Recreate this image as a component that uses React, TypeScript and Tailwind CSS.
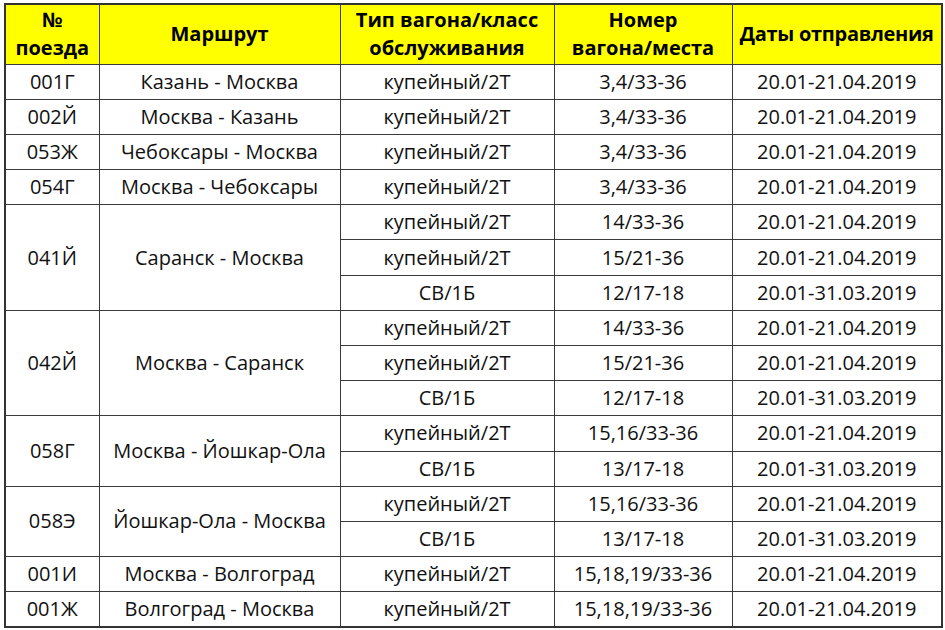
import React from "react";

type Seat = { type: string; car: string; dates: string };
type Train = { num: string; route: string; seats: Seat[] };

const trains: Train[] = [
    { num: "001Г", route: "Казань - Москва", seats: [{ type: "купейный/2Т", car: "3,4/33-36", dates: "20.01-21.04.2019" }] },
    { num: "002Й", route: "Москва - Казань", seats: [{ type: "купейный/2Т", car: "3,4/33-36", dates: "20.01-21.04.2019" }] },
    { num: "053Ж", route: "Чебоксары - Москва", seats: [{ type: "купейный/2Т", car: "3,4/33-36", dates: "20.01-21.04.2019" }] },
    { num: "054Г", route: "Москва - Чебоксары", seats: [{ type: "купейный/2Т", car: "3,4/33-36", dates: "20.01-21.04.2019" }] },
    {
        num: "041Й",
        route: "Саранск - Москва",
        seats: [
            { type: "купейный/2Т", car: "14/33-36", dates: "20.01-21.04.2019" },
            { type: "купейный/2Т", car: "15/21-36", dates: "20.01-21.04.2019" },
            { type: "СВ/1Б", car: "12/17-18", dates: "20.01-31.03.2019" },
        ],
    },
    {
        num: "042Й",
        route: "Москва - Саранск",
        seats: [
            { type: "купейный/2Т", car: "14/33-36", dates: "20.01-21.04.2019" },
            { type: "купейный/2Т", car: "15/21-36", dates: "20.01-21.04.2019" },
            { type: "СВ/1Б", car: "12/17-18", dates: "20.01-31.03.2019" },
        ],
    },
    {
        num: "058Г",
        route: "Москва - Йошкар-Ола",
        seats: [
            { type: "купейный/2Т", car: "15,16/33-36", dates: "20.01-21.04.2019" },
            { type: "СВ/1Б", car: "13/17-18", dates: "20.01-31.03.2019" },
        ],
    },
    {
        num: "058Э",
        route: "Йошкар-Ола - Москва",
        seats: [
            { type: "купейный/2Т", car: "15,16/33-36", dates: "20.01-21.04.2019" },
            { type: "СВ/1Б", car: "13/17-18", dates: "20.01-31.03.2019" },
        ],
    },
    { num: "001И", route: "Москва - Волгоград", seats: [{ type: "купейный/2Т", car: "15,18,19/33-36", dates: "20.01-21.04.2019" }] },
    { num: "001Ж", route: "Волгоград - Москва", seats: [{ type: "купейный/2Т", car: "15,18,19/33-36", dates: "20.01-21.04.2019" }] },
];

const td = "border border-[#3a3a3a] text-center align-middle p-0 leading-none whitespace-nowrap";
const th = "border border-[#3a3a3a] text-center align-middle p-0 leading-[28px] whitespace-nowrap";

export default function App() {
    return (
        <div className="min-h-screen bg-white pt-[3px] pl-[4px] font-['Open_Sans',sans-serif] text-[20px] text-[#111]">
            <table className="table-fixed border-collapse border-2 border-[#333] w-[937px]">
                <colgroup>
                    <col className="w-[94px]" />
                    <col className="w-[241px]" />
                    <col className="w-[214px]" />
                    <col className="w-[178px]" />
                    <col className="w-[210px]" />
                </colgroup>
                <thead>
                    {/* Yellow header */}
                    <tr className="h-[60px] bg-[#ffff00] font-bold text-black">
                        <th className={th}>№<br />поезда</th>
                        <th className={th}>Маршрут</th>
                        <th className={th}>Тип вагона/класс<br />обслуживания</th>
                        <th className={th}>Номер<br />вагона/места</th>
                        <th className={th + " tracking-[-0.3px]"}>Даты отправления</th>
                    </tr>
                </thead>
                <tbody>
                    {trains.map((t) =>
                        t.seats.map((s, i) => (
                            <tr key={t.num + i} className="h-[35.2px]">
                                {i === 0 && (
                                    <>
                                        <td rowSpan={t.seats.length} className={td}>{t.num}</td>
                                        <td rowSpan={t.seats.length} className={td}>{t.route}</td>
                                    </>
                                )}
                                <td className={td}>{s.type}</td>
                                <td className={td}>{s.car}</td>
                                <td className={td}>{s.dates}</td>
                            </tr>
                        ))
                    )}
                </tbody>
            </table>
        </div>
    );
}
